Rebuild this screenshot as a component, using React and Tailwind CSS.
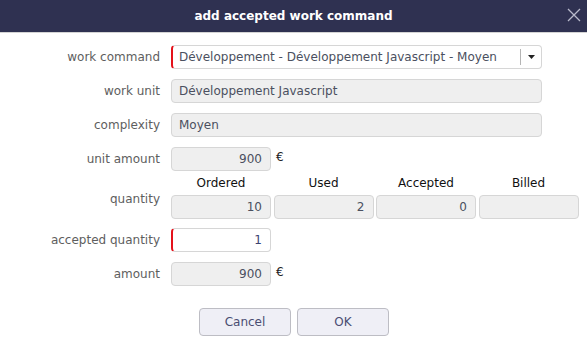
import React from "react";

const font = { fontFamily: '"DejaVu Sans", Verdana, sans-serif' };

function Label({ children }) {
  return (
    <div className="w-[160px] shrink-0 text-right text-[12px] text-[#5e5e5e] leading-none">{children}</div>
  );
}

function Box({ children, className = "" }) {
  return (
    <div className={"h-[24px] rounded-[4px] border border-[#d6d6d6] bg-[#efefef] flex items-center text-[12px] text-[#4b5060] " + className}>
      {children}
    </div>
  );
}

export default function App() {
  return (
    <div className="w-[587px] h-[344px] bg-white overflow-hidden" style={font}>
      <div className="h-[32px] bg-[#2f3151] relative flex items-center justify-center border-b border-[#d4d4d4] box-content">
        <span className="text-white font-bold text-[12px]">add accepted work command</span>
        <svg className="absolute right-[6px] top-[8px]" width="14" height="14" viewBox="0 0 14 14">
          <path d="M1 1 L13 13 M13 1 L1 13" stroke="#b9bacb" strokeWidth="1.3" />
        </svg>
      </div>
      <div className="pt-[12px] flex flex-col">
        <div className="flex items-center gap-[11px]">
          <Label>work command</Label>
          <div className="w-[371px] h-[24px] rounded-[4px] border border-[#d6d6d6] border-l-2 border-l-[#e4121b] bg-white flex items-center text-[12px] text-[#4b5060]">
            <span className="pl-[6px] flex-1">Développement - Développement Javascript - Moyen</span>
            <div className="w-px h-[16px] bg-[#b5b5b5]"></div>
            <div className="w-[20px] flex justify-center">
              <svg width="7" height="4" viewBox="0 0 7 4"><path d="M0 0 H7 L3.5 4 Z" fill="#222" /></svg>
            </div>
          </div>
        </div>
        <div className="flex items-center gap-[11px] mt-[10px]">
          <Label>work unit</Label>
          <Box className="w-[371px] pl-[7px]">Développement Javascript</Box>
        </div>
        <div className="flex items-center gap-[11px] mt-[10px]">
          <Label>complexity</Label>
          <Box className="w-[371px] pl-[7px]">Moyen</Box>
        </div>
        <div className="flex items-center gap-[11px] mt-[10px]">
          <Label>unit amount</Label>
          <Box className="w-[100px] justify-end pr-[8px]">900</Box>
          <span className="text-[12px] text-[#222] -ml-[6px] -mt-[5px]">€</span>
        </div>
        <div className="flex gap-[11px]">
          <div className="w-[160px] shrink-0 flex items-end justify-end pb-[14px]">
            <span className="text-[12px] text-[#5e5e5e] leading-none">quantity</span>
          </div>
          <div className="grid grid-cols-[100px_100px_100px_100px] gap-x-[2.5px]">
            <div className="h-[24px] flex items-center justify-center text-[12px] text-[#111]">Ordered</div>
            <div className="h-[24px] flex items-center justify-center text-[12px] text-[#111]">Used</div>
            <div className="h-[24px] flex items-center justify-center text-[12px] text-[#111]">Accepted</div>
            <div className="h-[24px] flex items-center justify-center text-[12px] text-[#111]">Billed</div>
            <Box className="justify-end pr-[8px]">10</Box>
            <Box className="justify-end pr-[8px]">2</Box>
            <Box className="justify-end pr-[8px]">0</Box>
            <Box className="justify-end pr-[8px]"></Box>
          </div>
        </div>
        <div className="flex items-center gap-[11px] mt-[9px]">
          <Label>accepted quantity</Label>
          <div className="w-[100px] h-[24px] rounded-[4px] border border-[#d6d6d6] border-l-2 border-l-[#e4121b] bg-white flex items-center justify-end pr-[8px] text-[12px] text-[#3a4270]">1</div>
        </div>
        <div className="flex items-center gap-[11px] mt-[10px]">
          <Label>amount</Label>
          <Box className="w-[100px] justify-end pr-[8px]">900</Box>
          <span className="text-[12px] text-[#222] -ml-[6px] -mt-[5px]">€</span>
        </div>
        <div className="flex justify-center gap-[6px] mt-[22px] pl-[1px]">
          <button className="w-[92px] h-[28px] rounded-[4px] border border-[#bdbdc4] bg-[#efeff6] text-[12px] text-[#4a4d72]">Cancel</button>
          <button className="w-[92px] h-[28px] rounded-[4px] border border-[#bdbdc4] bg-[#efeff6] text-[12px] text-[#4a4d72]">OK</button>
        </div>
      </div>
    </div>
  );
}
